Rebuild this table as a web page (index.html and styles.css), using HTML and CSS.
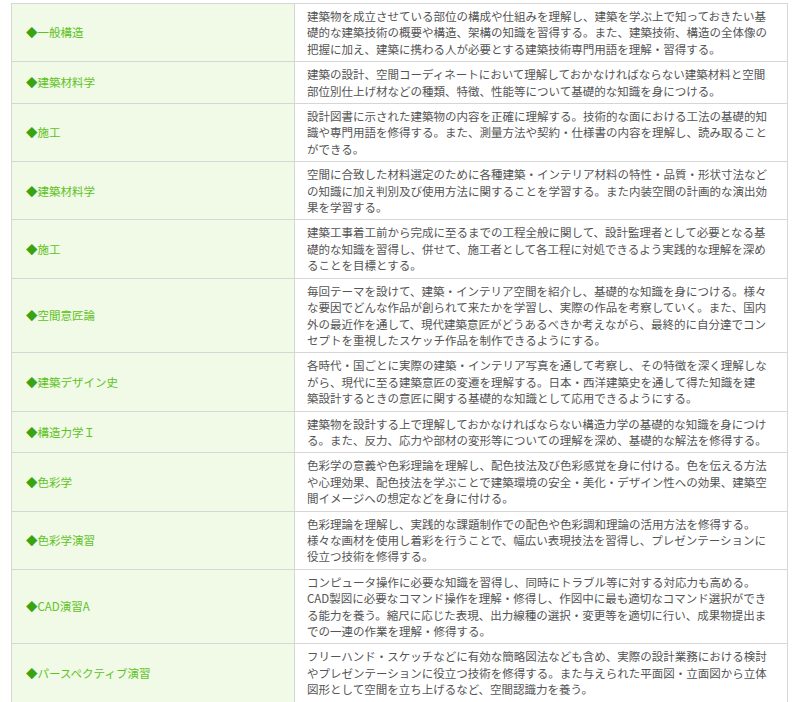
FILE: index.html
```html
<!DOCTYPE html>
<html lang="ja">
<head>
  <meta charset="UTF-8" />
  <meta name="viewport" content="width=device-width, initial-scale=1.0"/>
  <title>科目一覧</title>
  <link rel="stylesheet" href="styles.css">
</head>
<body>
  <div class="container">
    <table class="subjects">
      <tr>
        <th><span class="mark">◆</span>一般構造</th>
        <td>建築物を成立させている部位の構成や仕組みを理解し、建築を学ぶ上で知っておきたい基礎的な建築技術の概要や構造、架構の知識を習得する。また、建築技術、構造の全体像の把握に加え、建築に携わる人が必要とする建築技術専門用語を理解・習得する。</td>
      </tr>
      <tr>
        <th><span class="mark">◆</span>建築材料学</th>
        <td>建築の設計、空間コーディネートにおいて理解しておかなければならない建築材料と空間部位別仕上げ材などの種類、特徴、性能等について基礎的な知識を身につける。</td>
      </tr>
      <tr>
        <th><span class="mark">◆</span>施工</th>
        <td>設計図書に示された建築物の内容を正確に理解する。技術的な面における工法の基礎的知識や専門用語を修得する。また、測量方法や契約・仕様書の内容を理解し、読み取ることができる。</td>
      </tr>
      <tr>
        <th><span class="mark">◆</span>建築材料学</th>
        <td>空間に合致した材料選定のために各種建築・インテリア材料の特性・品質・形状寸法などの知識に加え判別及び使用方法に関することを学習する。また内装空間の計画的な演出効果を学習する。</td>
      </tr>
      <tr>
        <th><span class="mark">◆</span>施工</th>
        <td>建築工事着工前から完成に至るまでの工程全般に関して、設計監理者として必要となる基礎的な知識を習得し、併せて、施工者として各工程に対処できるよう実践的な理解を深めることを目標とする。</td>
      </tr>
      <tr>
        <th><span class="mark">◆</span>空間意匠論</th>
        <td>毎回テーマを設けて、建築・インテリア空間を紹介し、基礎的な知識を身につける。様々な要因でどんな作品が創られて来たかを学習し、実際の作品を考察していく。また、国内外の最近作を通して、現代建築意匠がどうあるべきか考えながら、最終的に自分達でコンセプトを重視したスケッチ作品を制作できるようにする。</td>
      </tr>
      <tr>
        <th><span class="mark">◆</span>建築デザイン史</th>
        <td>各時代・国ごとに実際の建築・インテリア写真を通して考察し、その特徴を深く理解しながら、現代に至る建築意匠の変遷を理解する。日本・西洋建築史を通して得た知識を建<span class="nowrap">築設</span>計するときの意匠に関する基礎的な知識として応用できるようにする。</td>
      </tr>
      <tr>
        <th><span class="mark">◆</span>構造力学Ｉ</th>
        <td>建築物を設計する上で理解しておかなければならない構造力学の基礎的な知識を身につける。また、反力、応力や部材の変形等についての理解を深め、基礎的な解法を修得する。</td>
      </tr>
      <tr>
        <th><span class="mark">◆</span>色彩学</th>
        <td>色彩学の意義や色彩理論を理解し、配色技法及び色彩感覚を身に付ける。色を伝える方法や心理効果、配色技法を学ぶことで建築環境の安全・美化・デザイン性への効果、建築空間イメージへの想定などを身に付ける。</td>
      </tr>
      <tr>
        <th><span class="mark">◆</span>色彩学演習</th>
        <td>色彩理論を理解し、実践的な課題制作での配色や色彩調和理論の活用方法を修得する。<br>様々な画材を使用し着彩を行うことで、幅広い表現技法を習得し、プレゼンテーションに役立つ技術を修得する。</td>
      </tr>
      <tr>
        <th><span class="mark">◆</span>CAD演習A</th>
        <td>コンピュータ操作に必要な知識を習得し、同時にトラブル等に対する対応力も高める。<br>CAD製図に必要なコマンド操作を理解・修得し、作図中に最も適切なコマンド選択ができる能力を養う。縮尺に応じた表現、出力線種の選択・変更等を適切に行い、成果物提出までの一連の作業を理解・修得する。</td>
      </tr>
      <tr>
        <th><span class="mark">◆</span>パースペクティブ演習</th>
        <td>フリーハンド・スケッチなどに有効な簡略図法なども含め、実際の設計業務における検討やプレゼンテーションに役立つ技術を修得する。また与えられた平面図・立面図から立体図形として空間を立ち上げるなど、空間認識力を養う。</td>
      </tr>
    </table>
  </div>
</body>
</html>
```

FILE: styles.css
```css
:root {
  --color-borde: #d6d6d6;
  --color-verde: #5fc21e;
  --color-marca: #3aa312;
  --color-fondo-verde: #f0fae6;
  --color-texto: #555;
}

body {
  font-family: Meiryo, "Noto Sans CJK JP", sans-serif;
  background-color: #fff;
  margin: 0;
  padding: 0;
}

.container {
  padding: 3px 12px 0 11px;
}

.subjects {
  width: 777px;
  border-collapse: collapse;
  border-left: 1px solid #cfcfcf;
  font-size: 11.5px;
  line-height: 16.4px;
}

.subjects th,
.subjects td {
  border: 1px solid var(--color-borde);
  vertical-align: middle;
}

.subjects th {
  width: 268px;
  padding: 4px 0 4px 14px;
  text-align: left;
  font-weight: normal;
  color: var(--color-verde);
  background-color: var(--color-fondo-verde);
}

.subjects td {
  padding: 4px 12px 4px 12px;
  color: var(--color-texto);
}

.mark {
  color: var(--color-marca);
}

.nowrap {
  white-space: nowrap;
}
```
